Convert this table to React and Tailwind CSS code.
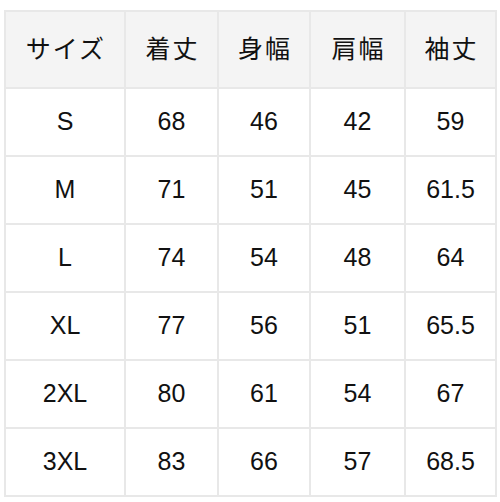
const headers = ['サイズ', '着丈', '身幅', '肩幅', '袖丈'];

const rows = [
  ['S', '68', '46', '42', '59'],
  ['M', '71', '51', '45', '61.5'],
  ['L', '74', '54', '48', '64'],
  ['XL', '77', '56', '51', '65.5'],
  ['2XL', '80', '61', '54', '67'],
  ['3XL', '83', '66', '57', '68.5'],
];

export default function App() {
  return (
    <div
      className="w-[500px] h-[502px] bg-white pt-[10px] pl-[4px]"
      style={{ fontFamily: '"Liberation Sans", Arial, "Noto Sans CJK JP", sans-serif' }}
    >
      {/* サイズ表 */}
      <div className="grid w-[493px] grid-cols-[118px_91px_90px_93px_89px] grid-rows-[75px_repeat(6,66px)] gap-[2px] p-[2px] bg-[#e8e8e8] text-[25px] text-[#111]">
        {headers.map((h) => (
          <div key={h} className="flex items-center justify-center bg-[#f4f4f4] pl-[2px] tracking-[2px]">
            {h}
          </div>
        ))}
        {rows.map((row) =>
          row.map((cell, i) => (
            <div key={row[0] + i} className="flex items-center justify-center bg-white">
              {cell}
            </div>
          ))
        )}
      </div>
    </div>
  );
}
